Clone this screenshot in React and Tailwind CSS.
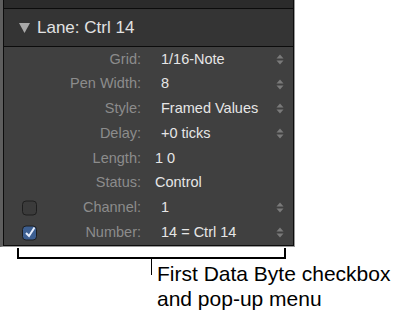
import React from "react";

const rows = [
  { label: "Grid:", value: "1/16-Note", popup: true },
  { label: "Pen Width:", value: "8", popup: true },
  { label: "Style:", value: "Framed Values", popup: true },
  { label: "Delay:", value: "+0 ticks", popup: true },
  { label: "Length:", value: "1 0", popup: false },
  { label: "Status:", value: "Control", popup: false },
  { label: "Channel:", value: "1", popup: true, check: "off" },
  { label: "Number:", value: "14 = Ctrl 14", popup: true, check: "on" },
];

const Stepper = () => (
  <svg width="8" height="11" viewBox="0 0 8 11" className="mr-[9px]">
    <path d="M4 0.5 L7.5 4.5 L0.5 4.5 Z" fill="#7a7a7a" />
    <path d="M4 10.5 L7.5 6.5 L0.5 6.5 Z" fill="#7a7a7a" />
  </svg>
);

const Checkbox = ({ on }) => (
  <div
    className={
      "absolute left-[18px] top-1/2 -translate-y-1/2 w-[15px] h-[15px] rounded-[4px] border border-[#1e1e1e] flex items-center justify-center " +
      (on ? "bg-[#3d5f91]" : "bg-[#3b3b3b]")
    }
  >
    {on && (
      <svg width="12" height="12" viewBox="0 0 12 12">
        <path d="M2 6.5 L5 9.5 L10.5 1" fill="none" stroke="#e8f0ff" strokeWidth="2" />
      </svg>
    )}
  </div>
);

export default function App() {
  return (
    <div className="w-[414px] h-[324px] bg-white relative" style={{ fontFamily: '"Liberation Sans", Arial, sans-serif' }}>
      <div className="w-[295px] border-l-[3px] border-[#5e5e5e] border-b border-b-[#9a9a9a] border-r border-r-[#9a9a9a]">
        <div className="border-l border-r border-b border-[#0c0c0c]">
          <div className="h-[9px] bg-[#2b2b2b] border-b border-[#0c0c0c]" />
          <div className="h-[38px] bg-[#343434] border-b border-[#0c0c0c] flex items-center">
            <svg width="11" height="10" viewBox="0 0 11 10" className="ml-[15px] mr-[7px]">
              <path d="M0 0 L11 0 L5.5 10 Z" fill="#a9a9a9" />
            </svg>
            <span className="text-[17px] text-[#e2e2e2]">Lane: Ctrl 14</span>
          </div>
          <div className="bg-[#404040]">
            {rows.map((r) => (
              <div key={r.label} className="relative h-[24.75px] flex items-center text-[14.5px]">
                {r.check && <Checkbox on={r.check === "on"} />}
                <div className="w-[137px] text-right text-[#8c8c8c]">{r.label}</div>
                <div className={(r.popup ? "ml-[20px]" : "ml-[14px]") + " flex-1 text-[#e6e6e6]"}>{r.value}</div>
                {r.popup && <Stepper />}
              </div>
            ))}
          </div>
        </div>
      </div>
      <div className="relative ml-[17px] w-[269px] h-[11px] mt-[1px] border-l-2 border-r-2 border-b-2 border-black" />
      <div className="flex ml-[151px]">
        <div className="w-[1px] h-[16px] bg-black" />
        <div className="ml-[5px] mt-[2px] text-[21px] leading-[25px] text-black">
          First Data Byte checkbox
          <br />
          and pop-up menu
        </div>
      </div>
    </div>
  );
}
